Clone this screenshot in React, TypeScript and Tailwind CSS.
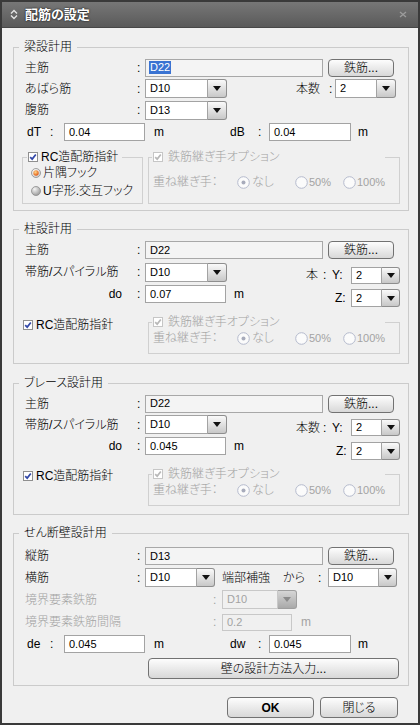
import clsx from "clsx";
import type { ReactNode } from "react";

const FONT = "[font-family:'Liberation_Sans','Noto_Sans_CJK_JP',sans-serif]";
const DIM = "text-[#a3a3a3]";

type Tone = "edit" | "read" | "dim";

const toneClass: Record<Tone, string> = {
  edit: "border-[#a3a3a3] bg-white",
  read: "border-[#a8a8a8] bg-[#f4f4f4]",
  dim: "border-[#c8c8c8] bg-[#f0f0f0] text-[#a3a3a3]",
};

const Field = ({
  children,
  className,
  tone = "edit",
}: {
  children?: ReactNode;
  className?: string;
  tone?: Tone;
}) => (
  <div
    className={clsx(
      "flex shrink-0 items-center border pl-[3px] text-[11px] leading-none",
      toneClass[tone],
      className
    )}
  >
    {children}
  </div>
);

const Tri = ({ dim }: { dim?: boolean }) => (
  <svg aria-hidden="true" height="5" viewBox="0 0 8 5" width="8">
    <path d="M0 0h8L4 5z" fill={dim ? "#8a8a8a" : "#111"} />
  </svg>
);

const Combo = ({
  value,
  inputW,
  btnW = "w-[19px]",
  height = "h-[19px]",
  dim,
}: {
  value: string;
  inputW: string;
  btnW?: string;
  height?: string;
  dim?: boolean;
}) => (
  <div className={clsx("flex shrink-0", height)}>
    <Field className={clsx("h-full", inputW)} tone={dim ? "dim" : "edit"}>
      <span className="pl-px">{value}</span>
    </Field>
    <div
      className={clsx(
        "flex h-full items-center justify-center rounded-r-[3px] border-y border-r bg-linear-to-b",
        btnW,
        dim
          ? "border-[#9e9e9e] from-[#d6d6d6] to-[#a9a9a9]"
          : "border-[#8e8e8e] from-[#fafafa] to-[#c8c8c8]"
      )}
    >
      <Tri dim={dim} />
    </div>
  </div>
);

const Button = ({
  children,
  className,
}: {
  children: ReactNode;
  className?: string;
}) => (
  <button
    className={clsx(
      "flex shrink-0 items-center justify-center rounded-[4px] border border-[#727272] bg-linear-to-b from-[#fdfdfd] to-[#d8d8d8] text-[12px] leading-none text-black",
      className
    )}
    type="button"
  >
    {children}
  </button>
);

const Check = ({ dim }: { dim?: boolean }) => (
  <span
    className={clsx(
      "flex size-[10px] shrink-0 items-center justify-center border bg-white",
      dim ? "border-[#c6c6c6]" : "border-[#8f8f8f]"
    )}
  >
    <svg aria-hidden="true" height="8" viewBox="0 0 8 8" width="8">
      <path
        d="M1.2 4.1 3.2 6.1 6.8 1.5"
        fill="none"
        stroke={dim ? "#b8b8b8" : "#3348a8"}
        strokeWidth="1.7"
      />
    </svg>
  </span>
);

/** Themed radio used by the active hook options. */
const Radio = ({ checked }: { checked?: boolean }) => (
  <svg
    aria-hidden="true"
    className="shrink-0"
    height="10"
    viewBox="0 0 10 10"
    width="10"
  >
    <defs>
      <radialGradient cx="35%" cy="30%" id="radio-ring" r="75%">
        <stop offset="0" stopColor="#ffffff" />
        <stop offset="1" stopColor="#cdcdcd" />
      </radialGradient>
      <radialGradient cx="35%" cy="30%" id="radio-off" r="75%">
        <stop offset="0" stopColor="#f4f4f4" />
        <stop offset="1" stopColor="#999999" />
      </radialGradient>
      <radialGradient cx="40%" cy="35%" id="radio-dot" r="70%">
        <stop offset="0" stopColor="#ffd98a" />
        <stop offset="1" stopColor="#e0500a" />
      </radialGradient>
    </defs>
    <circle
      cx="5"
      cy="5"
      fill={checked ? "url(#radio-ring)" : "url(#radio-off)"}
      r="4.5"
      stroke="#8d8d8d"
      strokeWidth="0.8"
    />
    {checked ? <circle cx="5" cy="5" fill="url(#radio-dot)" r="2.7" /> : null}
  </svg>
);

const DimRadio = ({ checked }: { checked?: boolean }) => (
  <svg
    aria-hidden="true"
    className="shrink-0"
    height="13"
    viewBox="0 0 13 13"
    width="13"
  >
    <circle
      cx="6.5"
      cy="6.5"
      fill="#fbfbfb"
      r="5.8"
      stroke="#b5bbcd"
      strokeWidth="1"
    />
    {checked ? <circle cx="6.5" cy="6.5" fill="#a7abbb" r="2" /> : null}
  </svg>
);

const Frame = ({
  title,
  className,
  children,
}: {
  title: string;
  className?: string;
  children: ReactNode;
}) => (
  <section className={clsx("relative border border-[#cbcbcb]", className)}>
    <span className="absolute -top-[9px] left-[5px] bg-[#f0f0f0] px-[5px] leading-[16px]">
      {title}
    </span>
    {children}
  </section>
);

const Row = ({
  className,
  children,
}: {
  className?: string;
  children: ReactNode;
}) => (
  <div className={clsx("flex items-center pl-[11px]", className)}>
    {children}
  </div>
);

const Label = ({
  children,
  w = "w-[112px]",
  className,
}: {
  children: ReactNode;
  w?: string;
  className?: string;
}) => (
  <span className={clsx("shrink-0 whitespace-nowrap", w, className)}>
    {children}
  </span>
);

const Colon = ({ w = "w-[8px]" }: { w?: string }) => (
  <span className={clsx("shrink-0", w)}>:</span>
);

/** Disabled splice option group box (鉄筋継ぎ手オプション). */
const SpliceBox = ({ height, pad }: { height: string; pad: string }) => (
  <div className={clsx("relative w-[252px] border border-[#d0d0d0]", height, DIM)}>
    <span className="absolute -top-[9px] left-[3px] flex h-[16px] w-[233px] items-center gap-[5px] bg-[#f0f0f0] pl-px">
      <Check dim />
      鉄筋継ぎ手オプション
    </span>
    <div className={clsx("flex h-[16px] items-center pl-[4px]", pad)}>
      <span className="w-[84px] shrink-0">重ね継ぎ手：</span>
      <span className="flex w-[58px] shrink-0 items-center gap-[2px]">
        <DimRadio checked />
        なし
      </span>
      <span className="flex w-[48px] shrink-0 items-center gap-[1px] text-[11px]">
        <DimRadio />
        50%
      </span>
      <span className="flex items-center gap-[1px] text-[11px]">
        <DimRadio />
        100%
      </span>
    </div>
  </div>
);

const DepthRow = ({
  left,
  leftValue,
  right,
  rightValue,
  className,
}: {
  left: string;
  leftValue: string;
  right: string;
  rightValue: string;
  className?: string;
}) => (
  <Row className={className}>
    <span className="w-[25px] shrink-0 pl-[2px]">{left}</span>
    <Colon w="w-[14px]" />
    <Field className="h-[18px] w-[81px]">
      <span className="pl-px">{leftValue}</span>
    </Field>
    <span className="w-[85px] shrink-0 pl-[9px]">m</span>
    <span className="w-[28px] shrink-0">{right}</span>
    <Colon w="w-[11px]" />
    <Field className="h-[18px] w-[82px]">
      <span className="pl-px">{rightValue}</span>
    </Field>
    <span className="pl-[7px]">m</span>
  </Row>
);

const RebarRow = ({
  label,
  value,
  selected,
  className,
}: {
  label: string;
  value: string;
  selected?: boolean;
  className?: string;
}) => (
  <Row className={className}>
    <Label>{label}</Label>
    <Colon />
    <Field className="h-[18px] w-[178px]" tone="read">
      {selected ? (
        <span className="bg-[#3a73d2] px-px py-[1px] text-white">{value}</span>
      ) : (
        <span className="pl-px">{value}</span>
      )}
    </Field>
    <Button className="ml-[5px] h-[18px] w-[66px]">鉄筋...</Button>
  </Row>
);

export default function App() {
  return (
    <div
      className={clsx(
        "flex h-[725px] w-[420px] flex-col overflow-hidden border-2 border-[#3a3a3a] bg-[#f0f0f0] text-[12px] leading-[16px] font-light text-black [font-feature-settings:'palt']",
        FONT
      )}
    >
      <div className="flex h-[26px] shrink-0 items-center border-b border-[#474747] bg-linear-to-b from-[#777777] to-[#5a5a5a] pr-[11px] pl-[8px]">
        <svg aria-hidden="true" height="11" viewBox="0 0 8 11" width="8">
          <path
            d="M1 4.5 4 1.5 7 4.5M1 6.5 4 9.5 7 6.5"
            fill="none"
            stroke="#e4e4e4"
            strokeWidth="1.4"
          />
        </svg>
        <span className="ml-[7px] text-[13px] font-bold text-white [text-shadow:0_0_2px_#000]">
          配筋の設定
        </span>
        <svg
          aria-hidden="true"
          className="ml-auto"
          height="7"
          viewBox="0 0 8 7"
          width="8"
        >
          <path d="M1 1l6 5M7 1 1 6" stroke="#9c9c9c" strokeWidth="1.3" />
        </svg>
      </div>

      <div className="flex flex-col pr-[9px] pl-[11px]">
        {/* 梁 */}
        <Frame className="mt-[19px] pt-[9px] pb-[6px]" title="梁設計用">
          <RebarRow className="h-[21px]" label="主筋" selected value="D22" />
          <Row className="h-[21px]">
            <Label>あばら筋</Label>
            <Colon />
            <Combo inputW="w-[63px]" value="D10" />
            <span className="ml-[69px] w-[33px] shrink-0">本数</span>
            <Colon w="w-[6px]" />
            <Combo inputW="w-[42px]" value="2" />
          </Row>
          <Row className="h-[22px]">
            <Label>腹筋</Label>
            <Colon />
            <Combo inputW="w-[63px]" value="D13" />
          </Row>
          <DepthRow
            className="h-[22px]"
            left="dT"
            leftValue="0.04"
            right="dB"
            rightValue="0.04"
          />
          <div className="mt-[14px] flex pl-[8px]">
            <div className="relative h-[47px] w-[121px] border border-[#d0d0d0]">
              <span className="absolute -top-[9px] left-[4px] flex h-[16px] items-center gap-[3px] bg-[#f0f0f0] pr-[4px] pl-px">
                <Check />
                RC造配筋指針
              </span>
              <div className="flex flex-col pt-[6px] pl-[8px]">
                <span className="flex h-[18px] items-center gap-[2px]">
                  <Radio checked />
                  片隅フック
                </span>
                <span className="flex h-[18px] items-center gap-[2px]">
                  <Radio />
                  U字形.交互フック
                </span>
              </div>
            </div>
            <div className="ml-[5px]">
              <SpliceBox height="h-[47px]" pad="mt-[16px]" />
            </div>
          </div>
        </Frame>

        {/* 柱 */}
        <Frame className="mt-[18px] pt-[9px] pb-[9px]" title="柱設計用">
          <RebarRow className="h-[22px]" label="主筋" value="D22" />
          <Row className="h-[22px]">
            <Label>帯筋/スパイラル筋</Label>
            <Colon />
            <Combo inputW="w-[63px]" value="D10" />
            <div className="mt-[6px] ml-[79px] flex items-center">
              <span className="w-[17px] shrink-0">本</span>
              <Colon w="w-[9px]" />
              <span className="w-[19px] shrink-0">Y:</span>
              <Combo btnW="w-[18px]" height="h-[17px]" inputW="w-[31px]" value="2" />
            </div>
          </Row>
          <Row className="h-[22px]">
            <Label className="pr-[15px] text-right">do</Label>
            <Colon />
            <Field className="h-[18px] w-[81px]">
              <span className="pl-px">0.07</span>
            </Field>
            <span className="w-[109px] shrink-0 pl-[8px]">m</span>
            <div className="mt-[8px] flex items-center">
              <span className="w-[16px] shrink-0">Z:</span>
              <Combo btnW="w-[18px]" height="h-[18px]" inputW="w-[31px]" value="2" />
            </div>
          </Row>
          <div className="mt-[9px] flex items-start pl-[9px]">
            <span className="mt-[3px] flex h-[16px] w-[125px] shrink-0 items-center gap-[3px]">
              <Check />
              RC造配筋指針
            </span>
            <div className="mt-[8px]">
              <SpliceBox height="h-[32px]" pad="mt-[7px]" />
            </div>
          </div>
        </Frame>

        {/* ブレース */}
        <Frame className="mt-[19px] pt-[9px] pb-[8px]" title="ブレース設計用">
          <RebarRow className="h-[21px]" label="主筋" value="D22" />
          <Row className="h-[21px]">
            <Label>帯筋/スパイラル筋</Label>
            <Colon />
            <Combo inputW="w-[63px]" value="D10" />
            <div className="mt-[6px] ml-[69px] flex items-center">
              <span className="w-[27px] shrink-0">本数</span>
              <Colon w="w-[9px]" />
              <span className="w-[19px] shrink-0">Y:</span>
              <Combo btnW="w-[18px]" height="h-[17px]" inputW="w-[31px]" value="2" />
            </div>
          </Row>
          <Row className="h-[22px]">
            <Label className="pr-[15px] text-right">do</Label>
            <Colon />
            <Field className="h-[18px] w-[81px]">
              <span className="pl-px">0.045</span>
            </Field>
            <span className="w-[110px] shrink-0 pl-[8px]">m</span>
            <div className="mt-[10px] flex items-center">
              <span className="w-[15px] shrink-0">Z:</span>
              <Combo btnW="w-[18px]" height="h-[18px]" inputW="w-[31px]" value="2" />
            </div>
          </Row>
          <div className="mt-[9px] flex items-start pl-[9px]">
            <span className="mt-[2px] flex h-[16px] w-[125px] shrink-0 items-center gap-[3px]">
              <Check />
              RC造配筋指針
            </span>
            <div className="mt-[8px]">
              <SpliceBox height="h-[32px]" pad="mt-[7px]" />
            </div>
          </div>
        </Frame>

        {/* せん断壁 */}
        <Frame className="mt-[18px] pt-[11px] pb-[6px]" title="せん断壁設計用">
          <RebarRow className="h-[22px]" label="縦筋" value="D13" />
          <Row className="h-[21px]">
            <Label>横筋</Label>
            <Colon />
            <Combo btnW="w-[18px]" inputW="w-[52px]" value="D10" />
            <span className="ml-[7px] w-[61px] shrink-0">端部補強</span>
            <span className="w-[35px] shrink-0">から</span>
            <Colon w="w-[10px]" />
            <Combo btnW="w-[18px]" inputW="w-[51px]" value="D10" />
          </Row>
          <Row className={clsx("h-[23px]", DIM)}>
            <Label w="w-[188px]">境界要素鉄筋</Label>
            <Colon w="w-[9px]" />
            <Combo dim inputW="w-[56px]" value="D10" />
          </Row>
          <Row className={clsx("h-[22px]", DIM)}>
            <Label w="w-[188px]">境界要素鉄筋間隔</Label>
            <Colon w="w-[9px]" />
            <Field className="h-[17px] w-[70px]" tone="dim">
              <span className="pl-px">0.2</span>
            </Field>
            <span className="pl-[9px]">m</span>
          </Row>
          <DepthRow
            className="h-[22px]"
            left="de"
            leftValue="0.045"
            right="dw"
            rightValue="0.045"
          />
          <div className="mt-[3px] pl-[134px]">
            <Button className="h-[21px] w-[251px]">壁の設計方法入力...</Button>
          </div>
        </Frame>
      </div>

      <div className="mt-[11px] flex justify-end gap-[6px] pr-[20px]">
        <Button className="h-[21px] w-[87px] font-bold">OK</Button>
        <Button className="h-[21px] w-[78px]">閉じる</Button>
      </div>
    </div>
  );
}
